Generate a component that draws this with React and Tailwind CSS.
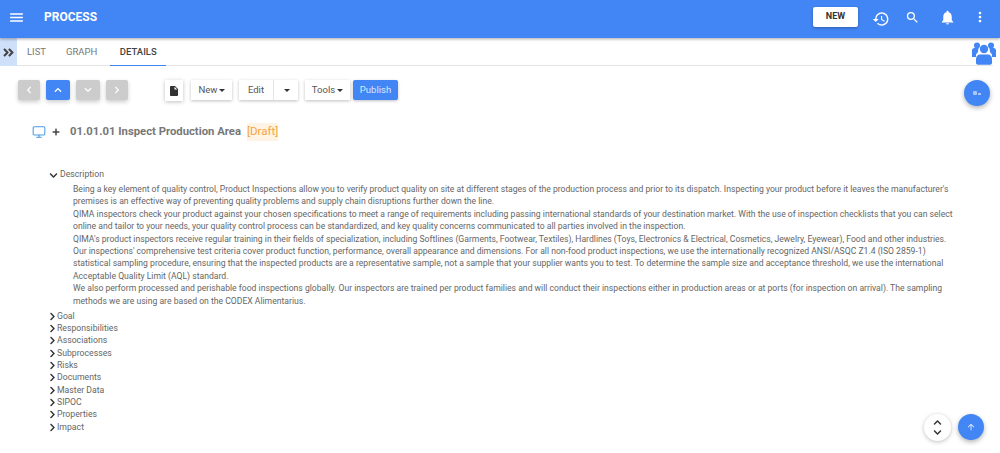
import { FaAngleDoubleRight, FaChevronDown, FaChevronLeft, FaChevronRight, FaChevronUp, FaPlus } from "react-icons/fa";
import { MdArrowUpward, MdHistory, MdInsertDriveFile, MdMenu, MdMoreVert, MdNotifications, MdSearch } from "react-icons/md";
import { Monitor } from "lucide-react";

const sections = ["Goal", "Responsibilities", "Associations", "Subprocesses", "Risks", "Documents", "Master Data", "SIPOC", "Properties", "Impact"];

const lines = [
  "Being a key element of quality control, Product Inspections allow you to verify product quality on site at different stages of the production process and prior to its dispatch. Inspecting your product before it leaves the manufacturer's",
  "premises is an effective way of preventing quality problems and supply chain disruptions further down the line.",
  "QIMA inspectors check your product against your chosen specifications to meet a range of requirements including passing international standards of your destination market. With the use of inspection checklists that you can select",
  "online and tailor to your needs, your quality control process can be standardized, and key quality concerns communicated to all parties involved in the inspection.",
  "QIMA's product inspectors receive regular training in their fields of specialization, including Softlines (Garments, Footwear, Textiles), Hardlines (Toys, Electronics & Electrical, Cosmetics, Jewelry, Eyewear), Food and other industries.",
  "Our inspections' comprehensive test criteria cover product function, performance, overall appearance and dimensions. For all non-food product inspections, we use the internationally recognized ANSI/ASQC Z1.4 (ISO 2859-1)",
  "statistical sampling procedure, ensuring that the inspected products are a representative sample, not a sample that your supplier wants you to test. To determine the sample size and acceptance threshold, we use the international",
  "Acceptable Quality Limit (AQL) standard.",
  "We also perform processed and perishable food inspections globally. Our inspectors are trained per product families and will conduct their inspections either in production areas or at ports (for inspection on arrival). The sampling",
  "methods we are using are based on the CODEX Alimentarius.",
];

function Caret() {
  return <span className="ml-[2px] inline-block h-0 w-0 border-x-[3px] border-t-[3px] border-x-transparent border-t-[#333]" />;
}

function PeopleIcon() {
  return (
    <svg className="absolute left-[972px] top-[42px]" width="24" height="23" viewBox="0 0 24 23" fill="#4285f4">
      <circle cx="5" cy="3.500" r="3" />
      <circle cx="19" cy="3.500" r="3" />
      <path d="M0 8.500C0 7 1 6 2.500 6h4L6 10 4 12.500V15H0z" />
      <path d="M24 8.500C24 7 23 6 21.500 6h-4l.5 4 2 2.500V15h4z" />
      <circle cx="12" cy="7" r="4.200" />
      <path d="M4 17c0-3 2-4.500 4-4.500h8c2 0 4 1.500 4 4.500v4c0 1-1 1.700-2 1.700H6c-1 0-2-.7-2-1.700z" />
    </svg>
  );
}

export default function App() {
  return (
    <div className="relative h-[453px] w-[1000px] overflow-hidden bg-white font-['Roboto',sans-serif]">
      <header className="relative z-10 flex h-[38px] items-center bg-[#4285f4] pb-[4px] shadow-[0_1px_3px_rgba(0,0,0,0.35)]">
        <MdMenu className="ml-[8px] text-white" size={17} />
        <span className="ml-[19px] text-[12px] font-bold text-white">PROCESS</span>
        <button className="ml-auto h-[20px] w-[45px] rounded-[2px] bg-white text-[9px] font-bold text-[#333] shadow-[0_1px_3px_rgba(0,0,0,0.3)]">NEW</button>
        <MdHistory className="ml-[14px] mt-[4px] text-white" size={18} />
        <MdSearch className="ml-[15px] text-white" size={15} />
        <MdNotifications className="ml-[19px] text-white" size={17} />
        <MdMoreVert className="ml-[16px] mr-[12px] text-white" size={16} />
      </header>

      <nav className="flex h-[28px] items-stretch">
        <div className="flex w-[17px] items-center justify-center bg-[#cfe0fb]">
          <FaAngleDoubleRight className="text-[#444]" size={13} />
        </div>
        <div className="flex w-[976px] items-stretch border-b border-[#e5e5e5] text-[9.500px]">
          <span className="ml-[10px] flex items-center pt-[1px] text-[#777]">LIST</span>
          <span className="ml-[20px] flex items-center pt-[1px] text-[#777]">GRAPH</span>
          <span className="ml-[13px] -mb-px flex w-[56px] items-center justify-center border-b-[1.500px] border-[#4285f4] pt-[1px] font-medium text-[#444]">DETAILS</span>
        </div>
        <PeopleIcon />
      </nav>

      <div className="mt-[14px] flex h-[21px] items-start pl-[18px]">
        <button className="flex h-[20px] w-[22px] items-center justify-center rounded-[2px] bg-[#cccccc] shadow-[0_2px_4px_rgba(0,0,0,0.2)]">
          <FaChevronLeft className="text-white" size={8} />
        </button>
        <button className="ml-[6px] flex h-[20px] w-[24px] items-center justify-center rounded-[2px] bg-[#4285f4] shadow-[0_2px_4px_rgba(0,0,0,0.2)]">
          <FaChevronUp className="text-white" size={8} />
        </button>
        <button className="ml-[6px] flex h-[20px] w-[24px] items-center justify-center rounded-[2px] bg-[#cccccc] shadow-[0_2px_4px_rgba(0,0,0,0.2)]">
          <FaChevronDown className="text-white" size={8} />
        </button>
        <button className="ml-[6px] flex h-[20px] w-[22px] items-center justify-center rounded-[2px] bg-[#cccccc] shadow-[0_2px_4px_rgba(0,0,0,0.2)]">
          <FaChevronRight className="text-white" size={8} />
        </button>
        <button className="ml-[37px] flex h-[21px] w-[18px] items-center justify-center bg-white shadow-[0_1px_4px_rgba(0,0,0,0.25)]">
          <MdInsertDriveFile className="text-[#333]" size={12} />
        </button>
        <div className="ml-[8px] flex h-[20px] gap-[7px] text-[9.500px] text-[#555]">
          <button className="flex w-[41px] items-center justify-center bg-white pl-[1px] shadow-[0_1px_3px_rgba(0,0,0,0.25)]">New<Caret /></button>
          <div className="flex bg-white shadow-[0_1px_3px_rgba(0,0,0,0.25)]">
            <button className="w-[35px] border-r border-[#e5e5e5]">Edit</button>
            <button className="flex w-[24px] items-center justify-center"><Caret /></button>
          </div>
          <button className="flex w-[45px] items-center justify-center bg-white shadow-[0_1px_3px_rgba(0,0,0,0.25)]">Tools<Caret /></button>
        </div>
        <button className="ml-[3px] h-[20px] w-[45px] rounded-[2px] bg-[#4285f4] text-[9.500px] text-[#dce8fd] shadow-[0_1px_3px_rgba(0,0,0,0.25)]">Publish</button>
      </div>

      <button className="absolute left-[964px] top-[80px] flex h-[26px] w-[26px] items-center justify-center gap-px rounded-full bg-[#4285f4] shadow-[0_2px_5px_rgba(0,0,0,0.3)]">
        <span className="h-[4px] w-[4px] rounded-[1px] bg-[#a9c6f9]" />
        <span className="mt-[1px] h-[2px] w-[3px] bg-[#a9c6f9]" />
      </button>

      <div className="mt-[22px] flex h-[18px] items-center pl-[32px]">
        <Monitor className="text-[#4a9be8]" size={14} strokeWidth={1.800} />
        <FaPlus className="ml-[6px] text-[#444]" size={8} />
        <span className="ml-[10px] text-[11.300px] font-bold text-[#777]">01.01.01 Inspect Production Area</span>
        <span className="ml-[6px] bg-[#fff3e3] text-[11.500px] text-[#f5a33b]">[Draft]</span>
      </div>

      <section className="mt-[28px] pl-[49px] text-[#666]">
        <div className="flex h-[12px] items-center text-[8.700px]">
          <FaChevronDown className="text-[#333]" size={9} />
          <span className="ml-[2px]">Description</span>
        </div>
        <div className="mt-[2px] pl-[24px] text-[8.620px] leading-[12.400px]">
          {lines.map((line) => (
            <p key={line} className="whitespace-nowrap">{line}</p>
          ))}
        </div>
        <ul className="mt-[3px] text-[8.700px]">
          {sections.map((section) => (
            <li key={section} className="flex h-[12.330px] items-center">
              <FaChevronRight className="-ml-[1px] text-[#333]" size={9} />
              <span>{section}</span>
            </li>
          ))}
        </ul>
      </section>

      <button className="absolute left-[924px] top-[414px] flex h-[27px] w-[27px] flex-col items-center justify-center rounded-full bg-white shadow-[0_1px_4px_rgba(0,0,0,0.25)]">
        <FaChevronUp className="mb-[1px] text-[#333]" size={9} />
        <FaChevronDown className="text-[#333]" size={9} />
      </button>
      <button className="absolute left-[958px] top-[414px] flex h-[26px] w-[26px] items-center justify-center rounded-full bg-[#4285f4] shadow-[0_2px_5px_rgba(0,0,0,0.3)]">
        <MdArrowUpward className="text-[#eef4fe]" size={10} />
      </button>
    </div>
  );
}
